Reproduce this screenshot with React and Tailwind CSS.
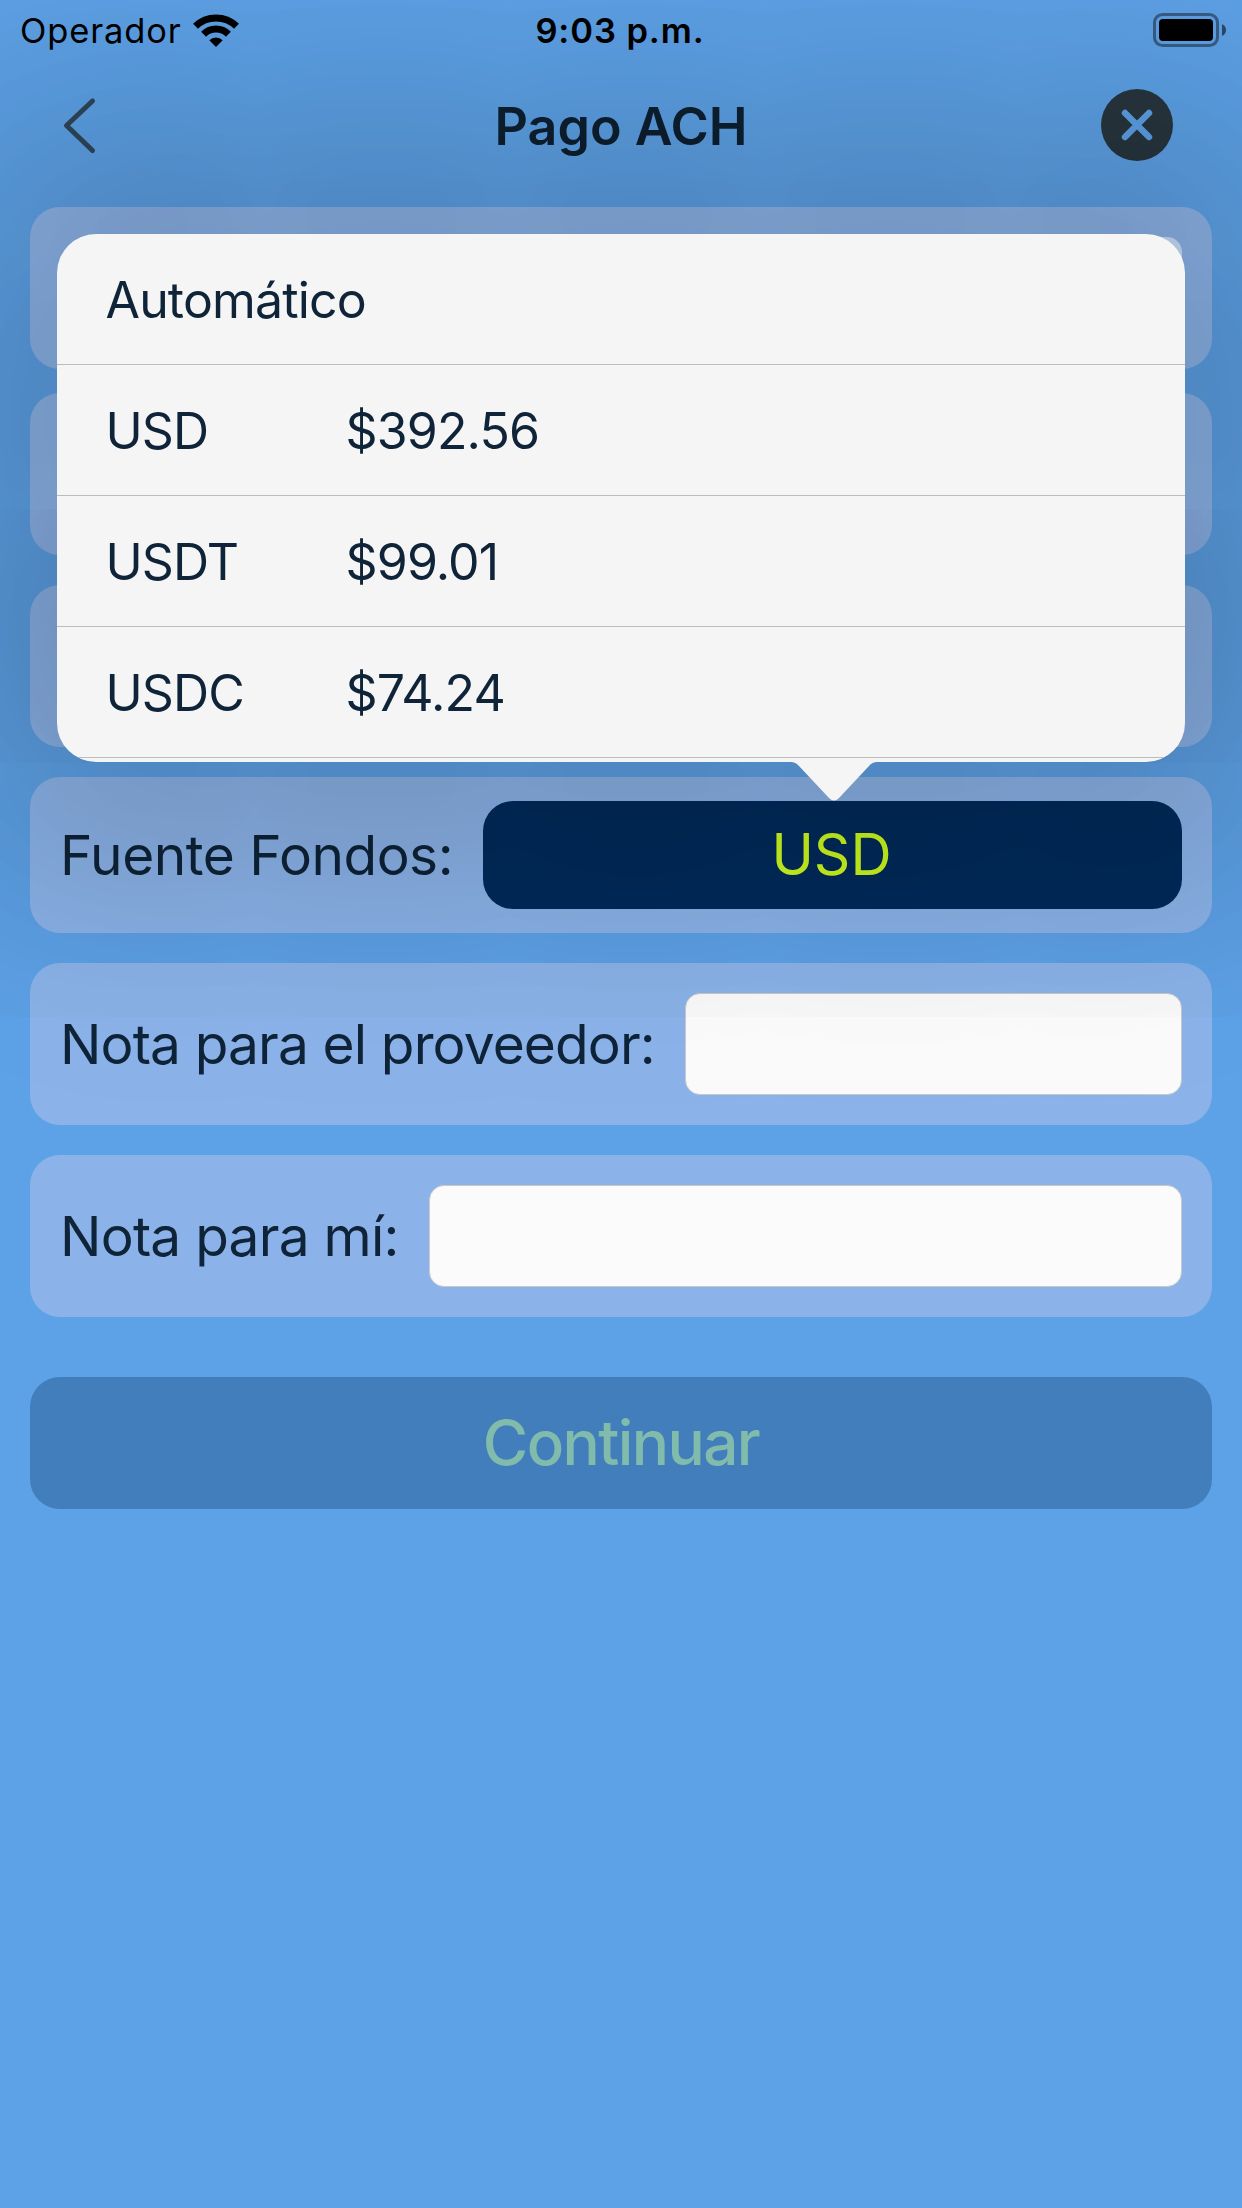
import React from 'react';

const accounts = [
    { name: 'USD', balance: '$392.56' },
    { name: 'USDT', balance: '$99.01' },
    { name: 'USDC', balance: '$74.24' }
];

const WifiIcon = () => (
    <svg className="ml-[11px] h-[33px] w-[46px]" viewBox="0 0 46 33" fill="none">
        <path d="M2.5 12.2 A29.5 29.5 0 0 1 43.5 12.2" stroke="#000" strokeWidth="7" />
        <path d="M10.6 20.2 A17.5 17.5 0 0 1 35.4 20.2" stroke="#000" strokeWidth="7" />
        <path d="M16.3 26.2 A9.6 9.6 0 0 1 29.7 26.2 L23 33 Z" fill="#000" />
    </svg>
);

const BatteryIcon = () => (
    <svg className="h-[34px] w-[74px]" viewBox="0 0 74 34" fill="none">
        <rect x="1.5" y="1.5" width="63" height="31" rx="8" stroke="#000" strokeOpacity="0.42" strokeWidth="3" />
        <rect x="6" y="6" width="54" height="22" rx="4" fill="#000" />
        <path d="M69 11 Q73 13 73 17 Q73 21 69 23 Z" fill="#000" fillOpacity="0.55" />
    </svg>
);

const StatusBar = () => (
    <div className="relative z-20 grid h-[60px] grid-cols-3 items-center text-[34.5px] text-black">
        <div className="flex items-center pl-5">
            <span className="mt-[2px] tracking-[0.85px]">Operador</span>
            <WifiIcon />
        </div>
        <span className="mt-[2px] pr-[2px] text-center font-semibold tracking-[0.9px]">9:03 p.m.</span>
        <div className="flex justify-end pr-[15px]">
            <BatteryIcon />
        </div>
    </div>
);

const NavBar = () => (
    <div className="flex h-[147px] items-center justify-between px-[60px] pb-[17px]">
        <div className="w-[81px]">
            <svg className="h-[60px] w-[72px]" viewBox="0 0 72 60" fill="none">
                <path d="M32.5 6 L6.5 30.5 L32.5 55.5" stroke="#2f4759" strokeWidth="5" strokeLinecap="round" strokeLinejoin="round" />
            </svg>
        </div>
        <h1 className="mt-[3px] text-[52px] font-semibold text-[#0e2030]">Pago ACH</h1>
        <div className="w-[81px]">
            <svg className="size-[72px]" viewBox="0 0 72 72" fill="none">
                <circle cx="36" cy="36" r="36" fill="#28363f" />
                <path d="M24 24 L48 48 M48 24 L24 48" stroke="#5da1e6" strokeWidth="6.4" strokeLinecap="round" />
            </svg>
        </div>
    </div>
);

const Card = ({ className = 'h-[162px]', label, labelClass, children }) => (
    <div className={`flex items-center gap-[30px] rounded-[30px] bg-[#8bb3e9] px-[30px] text-[55px] text-[#0f2438] ${className}`}>
        {label && <span className={`shrink-0 whitespace-nowrap ${labelClass}`}>{label}</span>}
        {children}
    </div>
);

const Field = ({ className = 'flex-1 border-[#c9c9c9] bg-[#fbfbfb]' }) => (
    <div className={`h-[102px] rounded-[15px] border ${className}`} />
);

const AccountMenu = () => (
    <div className="absolute top-[234px] left-[57px] z-10 h-[528px] w-[1128px] rounded-[39px] bg-[#f5f5f5] text-[50px] tracking-[-0.85px] text-[#0f2438] shadow-[0_0_200px_50px_rgba(0,0,0,0.12),0_0_240px_165px_rgba(0,0,0,0.11)]">
        <div className="overflow-hidden rounded-[39px]">
            <div className="flex h-[131px] items-center border-b border-[#bcbcbc] pt-[2px] pl-[48.5px]">Automático</div>
            {accounts.map((account) => (
                <div key={account.name} className="flex h-[131px] items-center border-b border-[#bcbcbc] pt-[2px] pl-[48.5px]">
                    <span className="w-[240px]">{account.name}</span>
                    <span>{account.balance}</span>
                </div>
            ))}
            <div className="h-[4px]" />
        </div>
        <svg className="absolute top-[528px] left-[732px] h-[39px] w-[90px]" viewBox="0 0 90 39">
            <path d="M0 0 C6 0 7 1 10 4 L40 36 Q45 41 50 36 L80 4 C83 1 84 0 90 0 Z" fill="#f5f5f5" />
        </svg>
    </div>
);

export default function App() {
    return (
        <div className="relative h-[2208px] w-[1242px] overflow-hidden bg-[#5da1e6] font-['Inter',sans-serif]">
            <StatusBar />
            <NavBar />

            <div className="flex flex-col px-[30px]">
                <Card className="h-[162px]">
                    <Field className="ml-auto w-[640px] border-transparent bg-[#c9e0fa]" />
                </Card>
                <Card className="mt-6 h-[162px]" />
                <Card className="mt-[30px] h-[162px]" />
                <Card className="mt-[30px] h-[156px]" label="Fuente Fondos:" labelClass="tracking-[-0.5px]">
                    <button className="h-[108px] flex-1 rounded-[30px] bg-[#002b5b] pr-[2px] text-[57px] text-[#cdfb20]">USD</button>
                </Card>
                <Card className="mt-[30px] h-[162px]" label="Nota para el proveedor:" labelClass="tracking-[-0.86px]">
                    <Field />
                </Card>
                <Card className="mt-[30px] h-[162px]" label="Nota para mí:" labelClass="tracking-[-0.77px]">
                    <Field />
                </Card>
                <button className="mt-[60px] h-[132px] rounded-[30px] bg-[#417ebb] pb-[2px] text-[62px] font-medium tracking-[-1.6px] text-[#80bbac]">
                    Continuar
                </button>
            </div>

            <AccountMenu />
        </div>
    );
}
